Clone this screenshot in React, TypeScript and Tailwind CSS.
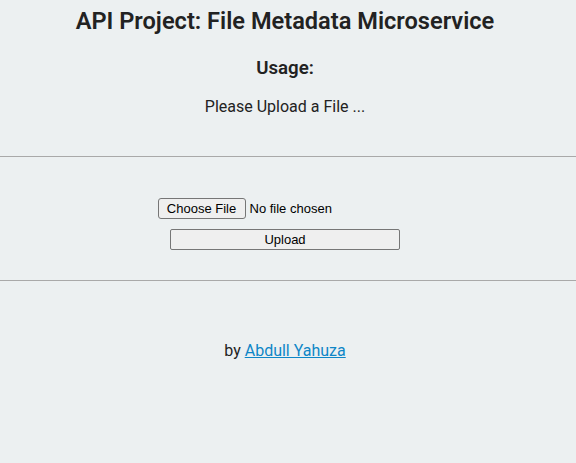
import React from 'react';

const roboto = { fontFamily: 'Roboto, "Noto Sans", sans-serif' };

export default function App() {
  return (
    <div className="min-h-[463px] bg-[#ecf0f1] text-[#222] text-center" style={roboto}>
      <div className="pt-[6px] pb-[38px] pr-[6px]">
        <h1 className="text-[23.6px] leading-[30px] font-semibold">API Project: File Metadata Microservice</h1>
        <h3 className="mt-[20px] text-[18.7px] leading-[24px] font-semibold">Usage:</h3>
        <p className="mt-[16px] text-[16px] leading-[22px]">Please Upload a File ...</p>
      </div>
      <hr className="border-t border-[#a9a9a9]" />
      <form
        className="flex flex-col items-center pt-[41px] pb-[30px] pr-[6px] text-[13px] text-black"
        style={{ fontFamily: '"Liberation Sans", Arial, sans-serif' }}
        onSubmit={(e) => e.preventDefault()}
      >
        <div className="flex items-center w-[255px]">
          <span className="h-[21px] w-[88px] leading-[19px] border border-[#767676] rounded-[3px] bg-[#efefef]">
            Choose File
          </span>
          <span className="ml-[4px]">No file chosen</span>
        </div>
        <button
          type="submit"
          className="mt-[10px] w-[230px] h-[21px] leading-[19px] border border-[#767676] rounded-[2px] bg-[#efefef]"
        >
          Upload
        </button>
      </form>
      <hr className="border-t border-[#a9a9a9]" />
      <p className="mt-[59px] pr-[6px] text-[16px] leading-[22px]">
        by{' '}
        <a href="#" className="text-[#0e86c7] underline">
          Abdull Yahuza
        </a>
      </p>
    </div>
  );
}
